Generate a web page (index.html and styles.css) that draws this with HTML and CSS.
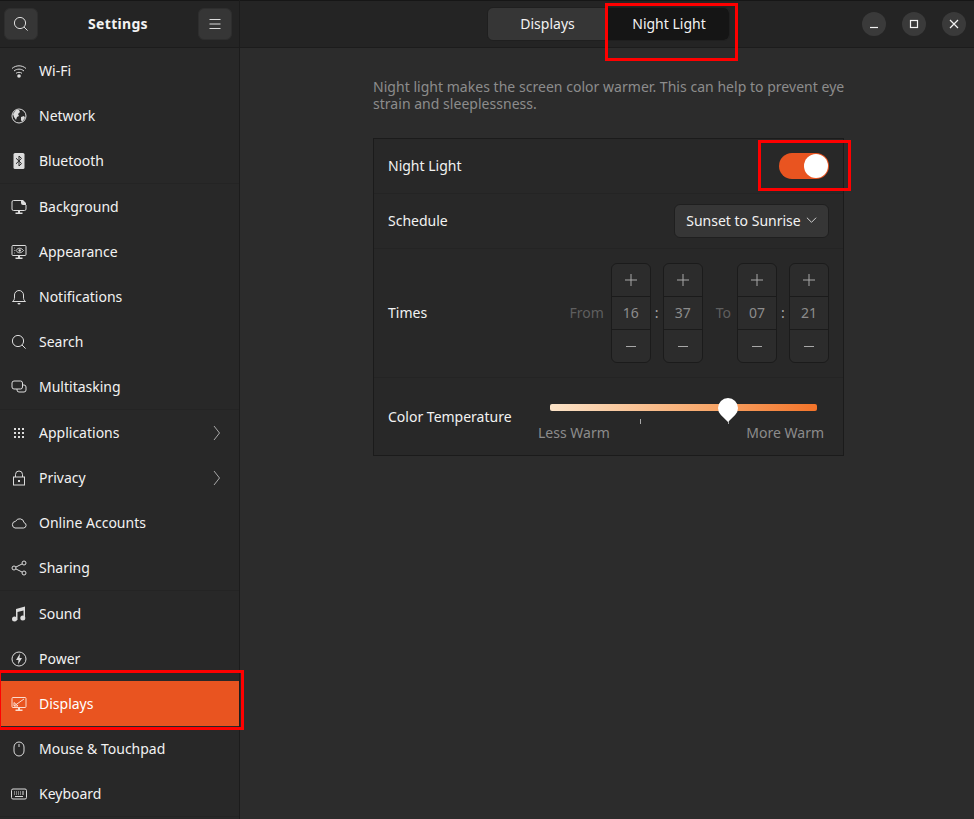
FILE: index.html
```html
<!DOCTYPE html>
<html lang="en">
<head>
<meta charset="utf-8">
<title>Settings</title>
<link rel="stylesheet" href="styles.css">
</head>
<body>
<div class="window">
  <aside class="sidebar">
    <header class="side-head">
      <button class="head-btn"><svg class="ic" viewBox="0 0 16 16"><circle cx="7" cy="7" r="5.6"/><path d="M11 11l3.6 3.6"/></svg></button>
      <span class="app-title">Settings</span>
      <button class="head-btn"><svg class="ic" viewBox="0 0 16 16"><path d="M2.5 3.5h11M2.5 8h11M2.5 12.5h11"/></svg></button>
    </header>
    <nav class="nav">
      <div class="nav-group">
        <a class="row"><svg class="ic" viewBox="0 0 16 16"><path d="M1 5.500c4-3.600 10-3.600 14 0M3 8c3-2.500 7-2.500 10 0M5 10.300c1.800-1.300 4.200-1.300 6 0"/><circle class="fill" cx="8" cy="13" r="1.800"/></svg><span>Wi-Fi</span></a>
        <a class="row"><svg class="ic" viewBox="0 0 16 16"><circle cx="8" cy="8" r="7"/><path class="fill" d="M2 6l3-4 3 0 1 2-2 2 1 2-2 1-1 3-2-3zM10 9l3-1 1 2-3 4-1-2z"/></svg><span>Network</span></a>
        <a class="row"><svg class="ic" viewBox="0 0 16 16"><rect class="fill" x="2.500" y="0" width="11" height="16" rx="1.500"/><path class="cut" d="M5 5.200l5.500 5.400L8 13V3l2.500 2.400L5 10.800"/></svg><span>Bluetooth</span></a>
      </div>
      <div class="nav-group">
        <a class="row"><svg class="ic" viewBox="0 0 16 16"><path d="M10 1.500H2.500a1.500 1.500 0 0 0-1.500 1.500v7a1.500 1.500 0 0 0 1.500 1.500h11a1.500 1.500 0 0 0 1.500-1.500V6"/><path class="fill" d="M10 1h2l3 3v2h-3a2 2 0 0 1-2-2zM7 11.500h2v2H7zM4.500 13.500h7V15h-7z"/></svg><span>Background</span></a>
        <a class="row"><svg class="ic" viewBox="0 0 16 16"><rect x="1" y="1.500" width="14" height="10" rx="1"/><path d="M3 4h.6M3 6.500h.6M3 9h.6M5 6.500c2-3 5-3 7.500 0-2.500 3-5.500 3-7.500 0z"/><circle class="fill" cx="8.700" cy="6.500" r="1.200"/><path class="fill" d="M7 11.500h2v2H7zM4.500 13.500h7V15h-7z"/></svg><span>Appearance</span></a>
        <a class="row"><svg class="ic" viewBox="0 0 16 16"><path d="M1.500 12.500c1.500-1 2-2 2-4.500v-2a4.500 4.500 0 0 1 9 0v2c0 2.500.5 3.500 2 4.500z"/><path class="fill" d="M6.500 14h3a1.500 1.500 0 0 1-3 0z"/></svg><span>Notifications</span></a>
        <a class="row"><svg class="ic" viewBox="0 0 16 16"><circle cx="7" cy="7" r="5.600"/><path d="M11 11l3.600 3.600"/></svg><span>Search</span></a>
        <a class="row"><svg class="ic" viewBox="0 0 16 16"><rect x="1" y="2" width="10.500" height="8" rx="2"/><path d="M11.500 6h1.500a2 2 0 0 1 2 2v3a2 2 0 0 1-2 2H8a2 2 0 0 1-2-2v-1"/></svg><span>Multitasking</span></a>
      </div>
      <div class="nav-group">
        <a class="row"><svg class="ic" viewBox="0 0 16 16"><path class="fill" d="M3 3h2v2H3zM7 3h2v2H7zM11 3h2v2h-2zM3 7h2v2H3zM7 7h2v2H7zM11 7h2v2h-2zM3 11h2v2H3zM7 11h2v2H7zM11 11h2v2h-2z"/></svg><span>Applications</span><svg class="chev" viewBox="0 0 8 16"><path d="M1 1l5.500 7L1 15"/></svg></a>
        <a class="row"><svg class="ic" viewBox="0 0 16 16"><rect x="2.500" y="7" width="11" height="8"/><path d="M4.500 7V4.500a3.500 3.500 0 0 1 7 0V7"/><rect class="fill" x="7" y="10" width="2" height="2"/></svg><span>Privacy</span><svg class="chev" viewBox="0 0 8 16"><path d="M1 1l5.500 7L1 15"/></svg></a>
        <a class="row"><svg class="ic" viewBox="0 0 16 16"><path d="M4 13h8.500a2.700 2.700 0 0 0 .6-5.300A4.500 4.500 0 0 0 4.600 6.300 3.400 3.400 0 0 0 4 13z"/></svg><span>Online Accounts</span></a>
        <a class="row"><svg class="ic" viewBox="0 0 16 16"><circle cx="3" cy="8" r="2"/><circle cx="13" cy="3" r="2"/><circle cx="13" cy="13" r="2"/><path d="M4.800 7.100l6.400-3.200M4.800 8.900l6.400 3.200"/></svg><span>Sharing</span></a>
      </div>
      <div class="nav-group">
        <a class="row"><svg class="ic" viewBox="0 0 16 16"><path class="fill" d="M5 3l9-2.500V12h-1.500V4.500L6.500 6v8H5z"/><circle class="fill" cx="3.500" cy="13" r="2.500"/><circle class="fill" cx="11.800" cy="12" r="2.500"/></svg><span>Sound</span></a>
        <a class="row"><svg class="ic" viewBox="0 0 16 16"><circle cx="8" cy="8" r="7"/><path class="fill" d="M9 2.500L5 9h2.500L7 13.500 11 7H8.500z"/></svg><span>Power</span></a>
        <a class="row active"><svg class="ic" viewBox="0 0 16 16"><rect x="1" y="1.500" width="14" height="10" rx="1"/><path d="M3 10l10-7M3 6.500l4 3.500H3z"/><path class="fill" d="M7 11.500h2v2H7zM4.500 13.500h7V15h-7z"/></svg><span>Displays</span></a>
        <a class="row"><svg class="ic" viewBox="0 0 16 16"><rect x="3" y="1" width="10" height="14" rx="5"/><path d="M8 3v3"/></svg><span>Mouse &amp; Touchpad</span></a>
        <a class="row"><svg class="ic" viewBox="0 0 16 16"><rect x=".5" y="3" width="15" height="10" rx="1.500"/><path d="M3 6h1M5 6h1M7 6h1M9 6h1M11 6h2M3 8h1M5 8h1M7 8h1M9 8h1M11 8h2M4 10.500h8"/></svg><span>Keyboard</span></a>
      </div>
    </nav>
  </aside>
  <main class="main">
    <header class="main-head">
      <div class="spacer"></div>
      <div class="switcher">
        <button class="tab">Displays</button>
        <button class="tab tab-on">Night Light</button>
      </div>
      <div class="win-btns">
        <button class="win-btn"><svg class="ic-s" viewBox="0 0 12 12"><path d="M2 9.500h8"/></svg></button>
        <button class="win-btn"><svg class="ic-s" viewBox="0 0 12 12"><rect x="2.500" y="2.500" width="7" height="7"/></svg></button>
        <button class="win-btn"><svg class="ic-s" viewBox="0 0 12 12"><path d="M2 2l8 8M10 2l-8 8"/></svg></button>
      </div>
    </header>
    <section class="content">
      <p class="desc">Night light makes the screen color warmer. This can help to prevent eye<br>strain and sleeplessness.</p>
      <div class="frame">
        <div class="frow r-night">
          <span class="lab">Night Light</span>
          <div class="toggle"><div class="knob"></div></div>
        </div>
        <div class="frow r-sched">
          <span class="lab">Schedule</span>
          <button class="drop">Sunset to Sunrise <svg class="drop-ch" viewBox="0 0 12 8"><path d="M1 1.500l5 5 5-5"/></svg></button>
        </div>
        <div class="frow r-times">
          <span class="lab">Times</span>
          <div class="times">
            <span class="t-lab t-from">From</span>
            <div class="spin"><div class="sp-b"><svg class="sp-ic" viewBox="0 0 12 12"><path d="M0 6h12M6 0v12"/></svg></div><div class="sp-v">16</div><div class="sp-b"><svg class="sp-ic" viewBox="0 0 12 12"><path d="M1 6.500h10"/></svg></div></div>
            <span class="colon">:</span>
            <div class="spin"><div class="sp-b"><svg class="sp-ic" viewBox="0 0 12 12"><path d="M0 6h12M6 0v12"/></svg></div><div class="sp-v">37</div><div class="sp-b"><svg class="sp-ic" viewBox="0 0 12 12"><path d="M1 6.500h10"/></svg></div></div>
            <span class="t-lab t-to">To</span>
            <div class="spin"><div class="sp-b"><svg class="sp-ic" viewBox="0 0 12 12"><path d="M0 6h12M6 0v12"/></svg></div><div class="sp-v">07</div><div class="sp-b"><svg class="sp-ic" viewBox="0 0 12 12"><path d="M1 6.500h10"/></svg></div></div>
            <span class="colon">:</span>
            <div class="spin"><div class="sp-b"><svg class="sp-ic" viewBox="0 0 12 12"><path d="M0 6h12M6 0v12"/></svg></div><div class="sp-v">21</div><div class="sp-b"><svg class="sp-ic" viewBox="0 0 12 12"><path d="M1 6.500h10"/></svg></div></div>
          </div>
        </div>
        <div class="frow r-temp">
          <span>Color Temperature</span>
          <div class="scale">
            <div class="track"></div>
            <i class="tick tick-a"></i>
            <i class="tick tick-b"></i>
            <svg class="thumb" viewBox="0 0 20 24"><path d="M10 24L2.900 17.100A10 10 0 1 1 17.100 17.100z"/></svg>
            <div class="scale-labs"><span>Less Warm</span><span>More Warm</span></div>
          </div>
        </div>
      </div>
    </section>
  </main>
</div>
<div class="mark mark-nav"></div>
<div class="mark mark-tab"></div>
<div class="mark mark-tog"></div>
</body>
</html>
```
FILE: styles.css
```css
* { box-sizing: border-box; }
html, body { margin: 0; height: 100%; overflow: hidden; background: #2c2c2c; }
body { font-family: "Noto Sans", "Open Sans", sans-serif; font-size: 14px; color: #f2f2f2; }
button { font: inherit; color: inherit; border: 0; padding: 0; background: none; }
.window { display: flex; height: 819px; }
.sidebar { width: 240px; flex: none; background: #282828; border-right: 1px solid #1c1c1c; display: flex; flex-direction: column; }
.side-head { height: 48px; flex: none; background: #242424; border-bottom: 1px solid #1c1c1c; box-shadow: inset 0 1px 0 #161616; display: flex; align-items: center; justify-content: space-between; padding: 0 7px 0 4px; }
.head-btn { width: 34px; height: 32px; border-radius: 6px; background: #363636; border: 1px solid #2e2e2e; display: flex; align-items: center; justify-content: center; }
.app-title { font-weight: 700; font-size: 14px; letter-spacing: .3px; }
.ic { width: 16px; height: 16px; fill: none; stroke: #dcdcdc; stroke-width: 1; }
.ic .fill { fill: #dcdcdc; stroke: none; }
.ic .cut { stroke: #282828; fill: none; }
.nav { display: flex; flex-direction: column; }
.nav-group { border-bottom: 1px solid #242424; }
.row { height: 45px; display: flex; align-items: center; gap: 12px; padding: 0 18px 0 11px; color: #f2f2f2; }
.row span { flex: 1; }
.chev { width: 8px; height: 16px; fill: none; stroke: #a8a8a8; stroke-width: 1; }
.row.active { background: #e95420; color: #fff; }
.row.active .ic { stroke: #fbdccf; }
.row.active .ic .fill { fill: #fbdccf; }
.main { flex: 1; display: flex; flex-direction: column; min-width: 0; }
.main-head { height: 48px; flex: none; background: #242424; border-bottom: 1px solid #1c1c1c; box-shadow: inset 0 1px 0 #161616; display: grid; grid-template-columns: 1fr auto 1fr; align-items: center; padding-left: 3px; }
.switcher { display: flex; height: 34px; border: 1px solid #1f1f1f; border-radius: 6px; background: #363636; }
.tab { width: 119px; border-radius: 5px 0 0 5px; }
.tab-on { width: 122px; padding-left: 2px; background: #151515; border-radius: 0 5px 5px 0; }
.win-btns { display: flex; justify-content: flex-end; gap: 16px; padding-right: 8px; }
.win-btn { width: 24px; height: 24px; border-radius: 50%; background: #3a3a3a; display: flex; align-items: center; justify-content: center; }
.ic-s { width: 12px; height: 12px; fill: none; stroke: #f2f2f2; stroke-width: 1.200; }
.content { width: 471px; margin-left: 133px; padding-top: 30px; }
.desc { margin: 0 0 26px; color: #8c8c8c; line-height: 17px; letter-spacing: .03px; white-space: nowrap; }
.frame { background: #282828; border: 1px solid #1b1b1b; }
.frow { display: flex; align-items: center; justify-content: space-between; padding: 0 14px; border-bottom: 1px solid #242424; }
.frow:last-child { border-bottom: 0; }
.lab { padding-bottom: 2px; }
.r-night { height: 55px; }
.r-sched { height: 55px; }
.r-times { height: 129px; }
.r-temp { height: 77px; }
.toggle { width: 50px; height: 26px; border-radius: 13px; background: #e95420; display: flex; justify-content: flex-end; align-items: center; padding-right: 1px; }
.knob { width: 24px; height: 24px; border-radius: 50%; background: #fff; }
.drop { width: 155px; height: 34px; border: 1px solid #1f1f1f; border-radius: 6px; background: #363636; display: flex; align-items: center; justify-content: center; gap: 5px; padding-bottom: 2px; }
.drop-ch { width: 11px; height: 8px; fill: none; stroke: #e0e0e0; stroke-width: 1; }
.times { display: flex; align-items: center; color: #8c8c8c; }
.t-lab { color: #5f5f5f; padding-bottom: 2px; }
.t-from { margin-right: 7px; }
.t-to { margin: 0 6px 0 13px; }
.colon { width: 12px; text-align: center; color: #a8a8a8; padding-bottom: 2px; }
.spin { width: 40px; height: 100px; border: 1px solid #1b1b1b; border-radius: 6px; background: #2c2c2c; display: flex; flex-direction: column; }
.sp-b { height: 32px; display: flex; align-items: center; justify-content: center; }
.sp-ic { width: 12px; height: 12px; fill: none; stroke: #a8a8a8; stroke-width: 1; }
.sp-v { height: 34px; display: flex; align-items: center; justify-content: center; padding-bottom: 2px; border-top: 1px solid #1b1b1b; border-bottom: 1px solid #1b1b1b; }
.scale { width: 286px; height: 61px; position: relative; margin-right: 5px; }
.track { position: absolute; left: 12px; right: 7px; top: 18px; height: 7px; border-radius: 2px; background: linear-gradient(90deg, #fbe3c8 0%, #f8a76a 60%, #f37329 100%); }
.tick { position: absolute; top: 33px; width: 1px; height: 5px; background: #a8a8a8; }
.tick-a { left: 102px; }
.tick-b { left: 190px; }
.thumb { position: absolute; left: 180px; top: 12px; width: 20px; height: 24px; fill: #fff; }
.scale-labs { position: absolute; left: 0; right: 0; top: 37px; display: flex; justify-content: space-between; color: #8c8c8c; }
.mark { position: absolute; border: 3px solid #f00; }
.mark-nav { left: -2px; top: 670px; width: 246px; height: 60px; }
.mark-tab { left: 605px; top: 3px; width: 133px; height: 58px; }
.mark-tog { left: 758px; top: 140px; width: 93px; height: 51px; }
```
